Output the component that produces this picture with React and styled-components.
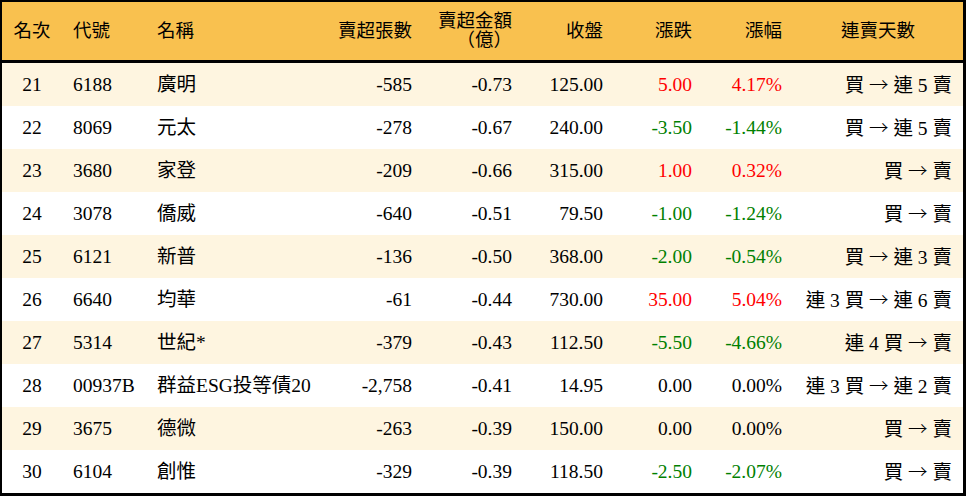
import React from "react";
import styled, { createGlobalStyle } from "styled-components";

const Global = createGlobalStyle`
  html, body { margin: 0; padding: 0; background: #fff; }
  body { font-family: "Liberation Serif", "Noto Sans CJK TC", serif; }
`;

const COLS = "60px 84px 177px 100px 100px 91px 89px 90px 170px";

const Table = styled.div`
  width: 966px;
  height: 496px;
  box-sizing: border-box;
  border-style: solid;
  border-color: #000;
  border-width: 2px 3px 3px 2px;
  display: flex;
  flex-direction: column;
  color: #000;
  font-size: 19.5px;
  text-spacing-trim: space-all;
`;

const HeadRow = styled.div`
  display: grid;
  grid-template-columns: ${COLS};
  height: 58px;
  background: #f9c14f;
  border-bottom: 3px solid #000;
  font-size: 18.5px;
`;

const Row = styled.div`
  display: grid;
  grid-template-columns: ${COLS};
  height: 43px;
  background: ${(p) => (p.$alt ? "#fef5e0" : "#ffffff")};
`;

const Cell = styled.div`
  display: flex;
  flex-direction: column;
  justify-content: center;
  padding: 0 11px;
  white-space: nowrap;
  text-align: ${(p) => p.$align || "left"};
  align-items: ${(p) =>
    p.$align === "right" ? "flex-end" : p.$align === "center" ? "center" : "flex-start"};
  color: ${(p) => p.$color || "inherit"};
  line-height: 19px;
`;

const Arrow = styled.span`
  font-family: "Noto Sans CJK TC", sans-serif;
  font-weight: 300;
`;

const headers = [
  { t: "名次", a: "center" },
  { t: "代號", a: "left" },
  { t: "名稱", a: "left" },
  { t: "賣超張數", a: "right" },
  { t: ["賣超金額", "（億）"], a: "right" },
  { t: "收盤", a: "right" },
  { t: "漲跌", a: "right" },
  { t: "漲幅", a: "right" },
  { t: "連賣天數", a: "center" },
];

const rows = [
  ["21", "6188", "廣明", "-585", "-0.73", "125.00", "5.00", "4.17%", ["買", "連 5 賣"]],
  ["22", "8069", "元太", "-278", "-0.67", "240.00", "-3.50", "-1.44%", ["買", "連 5 賣"]],
  ["23", "3680", "家登", "-209", "-0.66", "315.00", "1.00", "0.32%", ["買", "賣"]],
  ["24", "3078", "僑威", "-640", "-0.51", "79.50", "-1.00", "-1.24%", ["買", "賣"]],
  ["25", "6121", "新普", "-136", "-0.50", "368.00", "-2.00", "-0.54%", ["買", "連 3 賣"]],
  ["26", "6640", "均華", "-61", "-0.44", "730.00", "35.00", "5.04%", ["連 3 買", "連 6 賣"]],
  ["27", "5314", "世紀*", "-379", "-0.43", "112.50", "-5.50", "-4.66%", ["連 4 買", "賣"]],
  ["28", "00937B", "群益ESG投等債20", "-2,758", "-0.41", "14.95", "0.00", "0.00%", ["連 3 買", "連 2 賣"]],
  ["29", "3675", "德微", "-263", "-0.39", "150.00", "0.00", "0.00%", ["買", "賣"]],
  ["30", "6104", "創惟", "-329", "-0.39", "118.50", "-2.50", "-2.07%", ["買", "賣"]],
];

const aligns = ["center", "left", "left", "right", "right", "right", "right", "right", "right"];

const changeColor = (v) => {
  const n = parseFloat(v);
  if (n > 0) return "#ff0000";
  if (n < 0) return "#008000";
  return undefined;
};

export default function App() {
  return (
    <>
      <Global />
      <Table>
        <HeadRow>
          {headers.map((h, i) => (
            <Cell key={i} $align={h.a}>
              {Array.isArray(h.t) ? h.t.map((l) => <span key={l}>{l}</span>) : h.t}
            </Cell>
          ))}
        </HeadRow>
        {rows.map((r, ri) => (
          <Row key={ri} $alt={ri % 2 === 0}>
            {r.map((v, ci) => (
              <Cell
                key={ci}
                $align={aligns[ci]}
                $color={ci === 6 || ci === 7 ? changeColor(v) : undefined}
              >
                {Array.isArray(v) ? (
                  <span>
                    {v[0]} <Arrow>→</Arrow> {v[1]}
                  </span>
                ) : (
                  v
                )}
              </Cell>
            ))}
          </Row>
        ))}
      </Table>
    </>
  );
}
